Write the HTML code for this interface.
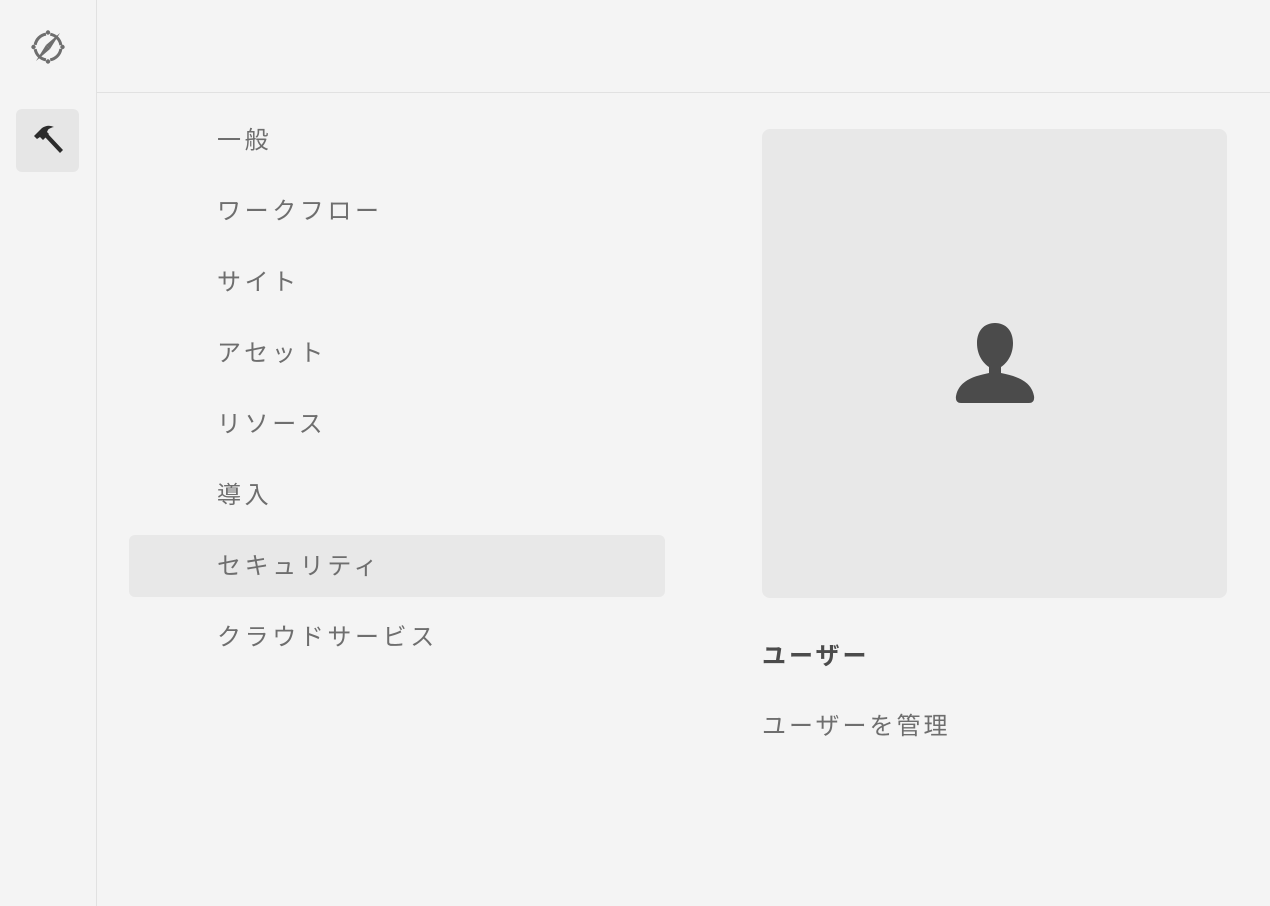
<!DOCTYPE html>
<html><head><meta charset="utf-8"><style>
body{margin:0;width:1270px;height:906px;background:#f4f4f4;font-family:"Liberation Sans","Noto Sans CJK JP",sans-serif;position:relative;overflow:hidden}
.side{position:absolute;left:0;top:0;width:96px;height:906px;border-right:1px solid #e1e1e1}
.hdr{position:absolute;left:97px;top:92px;right:0;height:1px;background:#e1e1e1}
.tool{position:absolute;left:16px;top:109px;width:63px;height:63px;background:#e6e6e6;border-radius:6px}
.item{position:absolute;left:217px;font-size:24px;color:#6e6e6e;line-height:30px;letter-spacing:3.6px}
.sel{position:absolute;left:129px;top:535px;width:536px;height:62px;background:#e8e8e8;border-radius:6px}
.card{position:absolute;left:762px;top:129px;width:465px;height:469px;background:#e8e8e8;border-radius:8px}
</style></head><body>
<div class="side"></div>
<div class="hdr"></div>
<svg style="position:absolute;left:29px;top:28px" width="38" height="38" viewBox="0 0 38 38">
<circle cx="19" cy="19" r="13" fill="none" stroke="#6e6e6e" stroke-width="3" stroke-dasharray="16 4.4" stroke-dashoffset="-2"/>
<circle cx="19" cy="4.5" r="2.2" fill="#6e6e6e"/><circle cx="19" cy="33.5" r="2.2" fill="#6e6e6e"/><circle cx="4.5" cy="19" r="2.2" fill="#6e6e6e"/><circle cx="33.5" cy="19" r="2.2" fill="#6e6e6e"/>
<path d="M31 5 L21 21 L17 17 Z" fill="#6e6e6e"/><path d="M7 33 L17 17 L21 21 Z" fill="#6e6e6e"/>
</svg>
<div class="tool"></div>
<svg style="position:absolute;left:30px;top:122px" width="36" height="36" viewBox="0 0 36 36">
<path d="M4 14 L12 6 Q18 2 24 5 Q18 6 17 10 L19 12 L13 18 L10 15 L7 17 Z" fill="#2c2c2c"/>
<path d="M15 15 L18 12 L33 28 L30 31 Z" fill="#2c2c2c"/>
</svg>
<div class="sel"></div>
<div class="item" style="top:126px">一般</div>
<div class="item" style="top:197px">ワークフロー</div>
<div class="item" style="top:268px">サイト</div>
<div class="item" style="top:339px">アセット</div>
<div class="item" style="top:410px">リソース</div>
<div class="item" style="top:481px">導入</div>
<div class="item" style="top:552px">セキュリティ</div>
<div class="item" style="top:623px">クラウドサービス</div>
<div class="card"></div>
<svg style="position:absolute;left:955px;top:323px" width="80" height="80" viewBox="0 0 80 80">
<path d="M40 0 C29 0 22 8 22 20 C22 32 28 40 34 44 L34 50 C20 53 4 57 1 73 Q0 80 6 80 L74 80 Q80 80 79 73 C76 57 60 53 46 50 L46 44 C52 40 58 32 58 20 C58 8 51 0 40 0 Z" fill="#4b4b4b"/>
</svg>
<div style="position:absolute;left:762px;top:642px;font-size:24px;font-weight:bold;color:#4b4b4b;line-height:30px;letter-spacing:3px">ユーザー</div>
<div style="position:absolute;left:762px;top:712px;font-size:24px;color:#6e6e6e;line-height:30px;letter-spacing:3px">ユーザーを管理</div>
</body></html>
